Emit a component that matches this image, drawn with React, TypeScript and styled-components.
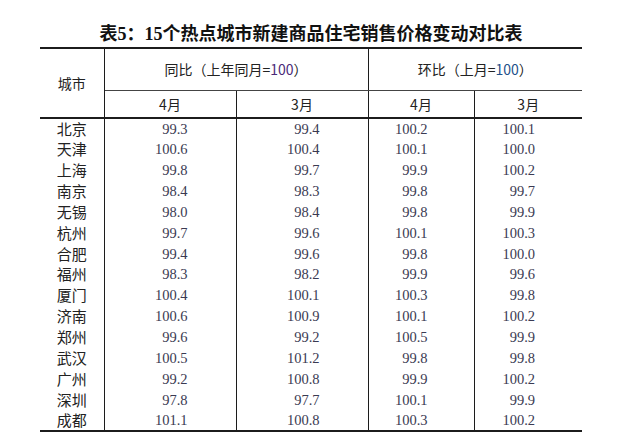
import React from 'react';
import styled, { createGlobalStyle } from 'styled-components';

const GlobalStyle = createGlobalStyle`
  html, body {
    margin: 0;
    padding: 0;
    background: #fff;
  }
`

const LINE = '#1c1c1c'
const SANS = '"Noto Sans CJK SC", "Noto Sans", sans-serif'

const rows: [string, string, string, string, string][] = [
    ['北京', '99.3', '99.4', '100.2', '100.1'],
    ['天津', '100.6', '100.4', '100.1', '100.0'],
    ['上海', '99.8', '99.7', '99.9', '100.2'],
    ['南京', '98.4', '98.3', '99.8', '99.7'],
    ['无锡', '98.0', '98.4', '99.8', '99.9'],
    ['杭州', '99.7', '99.6', '100.1', '100.3'],
    ['合肥', '99.4', '99.6', '99.8', '100.0'],
    ['福州', '98.3', '98.2', '99.9', '99.6'],
    ['厦门', '100.4', '100.1', '100.3', '99.8'],
    ['济南', '100.6', '100.9', '100.1', '100.2'],
    ['郑州', '99.6', '99.2', '100.5', '99.9'],
    ['武汉', '100.5', '101.2', '99.8', '99.8'],
    ['广州', '99.2', '100.8', '99.9', '100.2'],
    ['深圳', '97.8', '97.7', '100.1', '99.9'],
    ['成都', '101.1', '100.8', '100.3', '100.2'],
]

const Page = styled.div`
    padding: 23px 0 0 40px;
`

const Title = styled.h1`
    width: 542px;
    margin: 0 0 2px;
    text-align: center;
    font-family: "Liberation Serif", "Noto Sans CJK SC", serif;
    font-size: 18px;
    font-weight: bold;
    line-height: 22px;
    color: #111;
`

const Table = styled.table`
    width: 542px;
    border-collapse: collapse;
    table-layout: fixed;
    border-top: 2px solid ${LINE};
    border-bottom: 2px solid ${LINE};
`

const HeadCell = styled.th<{ $divider?: boolean; $under?: 'thin' | 'thick' }>`
    padding: 0;
    font-family: ${SANS};
    font-size: 14px;
    font-weight: normal;
    color: #222;
    text-align: center;
    vertical-align: middle;
    border-right: ${({ $divider }) => ($divider ? `1px solid ${LINE}` : 'none')};
    border-bottom: ${({ $under }) =>
        $under === 'thick' ? `2px solid ${LINE}` : $under === 'thin' ? `1px solid #444` : 'none'};
`

const GroupRow = styled.tr`
    height: 42px;
`

const MonthRow = styled.tr`
    height: 28px;
`

const Base = styled.span<{ $tint: string }>`
    color: ${({ $tint }) => $tint};
`

const BodyRow = styled.tr`
    height: 20.85px;
`

const CityCell = styled.td`
    padding: 0;
    text-align: center;
    font-family: ${SANS};
    font-size: 15px;
    line-height: 20px;
    color: #222;
    border-right: 1px solid ${LINE};
`

const NumCell = styled.td<{ $pad: number }>`
    padding: 0 ${({ $pad }) => $pad}px 0 0;
    text-align: right;
    font-family: "Liberation Serif", serif;
    font-size: 14.5px;
    line-height: 20px;
    color: #3a3a52;
    border-right: 1px solid ${LINE};
    &:last-child {
        border-right: none;
    }
`

const pads = [48, 48, 46, 47]

const App: React.FC = () => {
    return (
        <Page>
            <GlobalStyle />
            <Title>表5：15个热点城市新建商品住宅销售价格变动对比表</Title>
            <Table>
                <colgroup>
                    <col style={{ width: 64 }} />
                    <col style={{ width: 132 }} />
                    <col style={{ width: 132 }} />
                    <col style={{ width: 106 }} />
                    <col style={{ width: 108 }} />
                </colgroup>
                <thead>
                    <GroupRow>
                        <HeadCell rowSpan={2} $divider $under="thick">城市</HeadCell>
                        <HeadCell colSpan={2} $divider $under="thin">
                            同比（上年同月=<Base $tint="#4a2a78">100</Base>）
                        </HeadCell>
                        <HeadCell colSpan={2} $under="thin">
                            环比（上月=<Base $tint="#23508a">100</Base>）
                        </HeadCell>
                    </GroupRow>
                    <MonthRow>
                        <HeadCell $divider $under="thick">4月</HeadCell>
                        <HeadCell $divider $under="thick">3月</HeadCell>
                        <HeadCell $divider $under="thick">4月</HeadCell>
                        <HeadCell $under="thick">3月</HeadCell>
                    </MonthRow>
                </thead>
                <tbody>
                    {rows.map(([city, ...values]) => (
                        <BodyRow key={city}>
                            <CityCell>{city}</CityCell>
                            {values.map((v, i) => (
                                <NumCell key={i} $pad={pads[i]}>{v}</NumCell>
                            ))}
                        </BodyRow>
                    ))}
                </tbody>
            </Table>
        </Page>
    );
}

export default App;
